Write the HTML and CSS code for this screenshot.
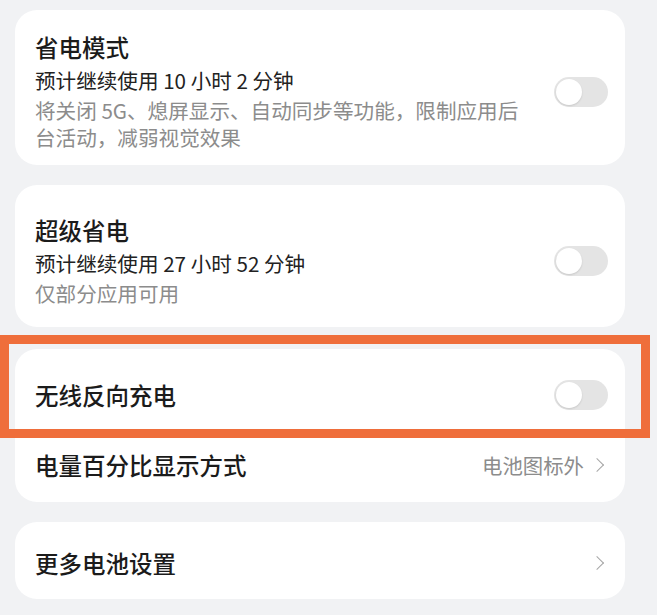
FILE: index.html
```html
<!DOCTYPE html>
<html lang="zh-CN">
<head>
  <meta charset="UTF-8">
  <meta name="viewport" content="width=device-width, initial-scale=1.0">
  <title>电池</title>
  <link rel="stylesheet" href="styles.css">
</head>
<body>
  <div class="page">
    <div class="card card-saver">
      <div class="texts">
        <div class="title">省电模式</div>
        <div class="sub">预计继续使用 10 小时 2 分钟</div>
        <div class="desc">将关闭 5G、熄屏显示、自动同步等功能，限制应用后台活动，减弱视觉效果</div>
      </div>
      <span class="toggle"></span>
    </div>

    <div class="card card-super">
      <div class="texts">
        <div class="title">超级省电</div>
        <div class="sub">预计继续使用 27 小时 52 分钟</div>
        <div class="desc">仅部分应用可用</div>
      </div>
      <span class="toggle"></span>
    </div>

    <div class="card card-list">
      <div class="row">
        <div class="title">无线反向充电</div>
        <span class="toggle"></span>
      </div>
      <div class="row">
        <div class="title">电量百分比显示方式</div>
        <div class="value">电池图标外<span class="chevron"></span></div>
      </div>
    </div>

    <div class="card card-more">
      <div class="row">
        <div class="title">更多电池设置</div>
        <span class="chevron"></span>
      </div>
    </div>

    <div class="highlight"></div>
  </div>
</body>
</html>
```

FILE: styles.css
```css
* {
  box-sizing: border-box;
  margin: 0;
  padding: 0;
}
body {
  font-family: "Noto Sans CJK SC", "Noto Sans", sans-serif;
  background-color: #f1f2f4;
  color: #1b1b1b;
}
.page {
  position: relative;
  padding: 10px 32px 15px 15px;
  display: flex;
  flex-direction: column;
  gap: 20px;
}
.card {
  background-color: #fff;
  border-radius: 22px;
  padding: 0 17px 0 20px;
}
.card-saver,
.card-super {
  display: flex;
  align-items: center;
  justify-content: space-between;
}
.card-saver {
  padding-top: 22px;
  padding-bottom: 14px;
}
.card-super {
  padding-top: 30px;
  padding-bottom: 20px;
}
.texts {
  width: 496px;
}
.title {
  font-size: 23.5px;
  line-height: 30px;
  font-weight: 500;
  color: #1b1b1b;
}
.sub {
  font-size: 20.6px;
  line-height: 30px;
  margin-top: 3px;
  color: #222;
}
.desc {
  font-size: 20.6px;
  line-height: 27px;
  margin-top: 2px;
  color: #8c8c8c;
}
.card-list {
  padding-top: 31px;
  padding-bottom: 22px;
  margin-top: 2px;
  display: flex;
  flex-direction: column;
  gap: 40px;
}
.card-more {
  padding-top: 26px;
  padding-bottom: 21px;
}
.row {
  display: flex;
  align-items: center;
  justify-content: space-between;
  height: 30px;
}
.value {
  display: flex;
  align-items: center;
  font-size: 20.4px;
  color: #8c8c8c;
}
.chevron {
  display: inline-block;
  width: 10px;
  height: 10px;
  border-top: 1.5px solid #a6a6a6;
  border-right: 1.5px solid #a6a6a6;
  transform: rotate(45deg);
  margin: 0 6px 0 8px;
}
.toggle {
  position: relative;
  flex: none;
  width: 54px;
  height: 30px;
  border-radius: 15px;
  background-color: #e4e4e4;
}
.toggle::after {
  content: "";
  position: absolute;
  left: 2px;
  top: 2px;
  width: 26px;
  height: 26px;
  border-radius: 50%;
  background-color: #fff;
  box-shadow: 0 1px 2px rgba(0, 0, 0, 0.12);
}
.highlight {
  position: absolute;
  left: 0;
  top: 335px;
  width: 650px;
  height: 103px;
  border: 9px solid #ef6e3b;
}
```
